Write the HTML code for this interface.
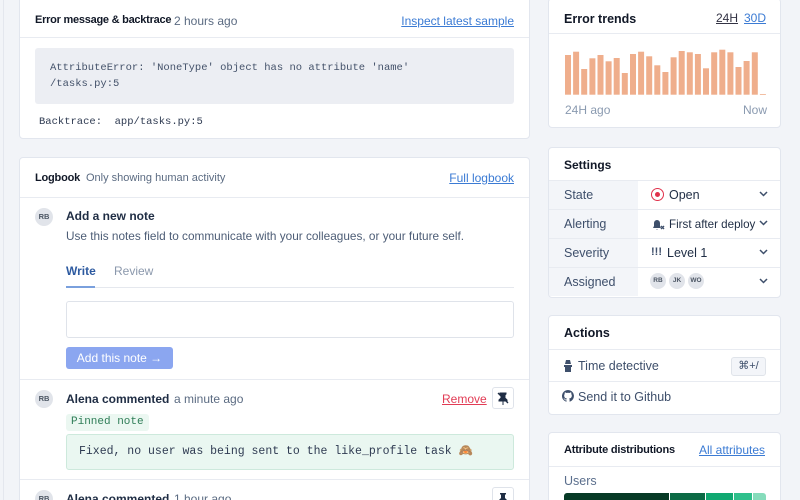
<!DOCTYPE html>
<html style="overflow:hidden;width:800px;height:500px"><head><meta charset="utf-8"><style>
*{box-sizing:border-box;margin:0;padding:0}
body{width:800px;height:500px;overflow:hidden;background:#f2f4f8;font-family:"Liberation Sans",sans-serif;position:relative;color:#1f2937}
.a{position:absolute}
.card{position:absolute;background:#fff;border:1px solid #e2e6ee;border-radius:4px;overflow:hidden}
.mono{font-family:"Liberation Mono",monospace}
.t{font-size:12px;color:#111827;font-weight:600}
.s{font-size:12px;color:#5b6b82}
.link{color:#3b7bd4;text-decoration:underline;font-size:12px}
.hr{position:absolute;left:0;right:0;height:1px;background:#e8ebf1}
.av{position:absolute;width:18px;height:18px;border-radius:50%;background:#e1e4ea;color:#4b5563;font-size:7.5px;font-weight:700;text-align:center;line-height:18px}
.row{position:absolute;left:0;right:0;height:29px;border-top:1px solid #e8ebf1}
.row .l{position:absolute;left:0;top:0;width:89px;height:28px;background:#f3f5f9;font-size:12.5px;color:#3e4f6b;padding:7px 0 0 15px}
.row .v{position:absolute;left:102px;top:7px;font-size:12.5px;color:#1f2d44}
.chev{position:absolute;right:12px;top:10px}
</style></head><body>
<div class="a" style="left:3px;top:0;width:1px;height:500px;background:#e4e7ee"></div>

<!-- error card -->
<div class="card" style="left:19px;top:-5px;width:511px;height:144px">
 <div class="a t" style="left:15px;top:18px;font-size:11px;letter-spacing:-0.25px">Error message &amp; backtrace</div>
 <div class="a s" style="left:154px;top:18px">2 hours ago</div>
 <div class="a link" style="right:15px;top:18px">Inspect latest sample</div>
 <div class="hr" style="top:41px"></div>
 <div class="a mono" style="left:15px;top:52px;width:479px;height:56px;background:#eceef3;border-radius:3px;padding:12px 15px;font-size:10.5px;line-height:16px;color:#44526a">AttributeError: 'NoneType' object has no attribute 'name'<br>/tasks.py:5</div>
 <div class="a mono" style="left:19px;top:120px;font-size:10.5px;color:#2f3b52">Backtrace:&nbsp; app/tasks.py:5</div>
</div>

<!-- logbook -->
<div class="card" style="left:19px;top:157px;width:511px;height:360px">
 <div class="a t" style="left:15px;top:14px;font-size:11px;letter-spacing:-0.2px">Logbook</div>
 <div class="a s" style="left:66px;top:14px;font-size:11px">Only showing human activity</div>
 <div class="a link" style="right:15px;top:13px">Full logbook</div>
 <div class="hr" style="top:39px"></div>
 <div class="av" style="left:15px;top:50px">RB</div>
 <div class="a" style="left:46px;top:51px;font-size:12px;font-weight:600;color:#1f2d44">Add a new note</div>
 <div class="a" style="left:46px;top:71px;font-size:11.8px;color:#4d5d76">Use this notes field to communicate with your colleagues, or your future self.</div>
 <div class="a" style="left:46px;top:106px;font-size:12px;font-weight:600;color:#2d5aa0">Write</div>
 <div class="a" style="left:94px;top:106px;font-size:12px;color:#8b98ac">Review</div>
 <div class="a" style="left:46px;top:129px;width:448px;height:1px;background:#e5e8ee"></div>
 <div class="a" style="left:46px;top:128px;width:29px;height:2px;background:#7aa0dd"></div>
 <div class="a" style="left:46px;top:143px;width:448px;height:37px;border:1px solid #dfe3ea;border-radius:3px"></div>
 <div class="a" style="left:46px;top:189px;width:107px;height:22px;background:#8ba6f0;border-radius:3px;color:#fff;font-size:12px;text-align:center;line-height:22px">Add this note →</div>
 <div class="hr" style="top:221px"></div>
 <div class="av" style="left:15px;top:232px">RB</div>
 <div class="a" style="left:46px;top:234px;font-size:12px;font-weight:600;color:#1f2d44">Alena commented</div>
 <div class="a s" style="left:154px;top:234px">a minute ago</div>
 <div class="a" style="left:422px;top:234px;font-size:12px;color:#e23c55;text-decoration:underline">Remove</div>
 <div class="a" style="left:472px;top:229px;width:22px;height:22px;border:1px solid #dfe3ea;border-radius:3px">
  <svg width="20" height="20" viewBox="0 0 20 20"><path d="M7 5h6v1l-1 1v3l2 2v1H6v-1l2-2V7L7 6z M10 13v4" fill="#1f2d44" stroke="#1f2d44" stroke-width="1"/><path d="M5 5l10 10" stroke="#1f2d44" stroke-width="1.3"/></svg>
 </div>
 <div class="a mono" style="left:46px;top:256px;height:17px;padding:0 5px;background:#ebf7f1;color:#2f7d57;font-size:11px;line-height:17px;border-radius:3px">Pinned note</div>
 <div class="a mono" style="left:46px;top:276px;width:448px;height:36px;background:#eaf7f1;border:1px solid #cde9dc;border-radius:3px;padding:0 0 0 12px;line-height:34px;font-size:11.5px;color:#2f3b52">Fixed, no user was being sent to the like_profile task 🙈</div>
 <div class="hr" style="top:321px"></div>
 <div class="av" style="left:15px;top:332px">RB</div>
 <div class="a" style="left:46px;top:334px;font-size:12px;font-weight:600;color:#1f2d44">Alena commented</div>
 <div class="a s" style="left:154px;top:334px">1 hour ago</div>
 <div class="a" style="left:472px;top:329px;width:22px;height:22px;border:1px solid #dfe3ea;border-radius:3px">
  <svg width="20" height="20" viewBox="0 0 20 20"><path d="M7 5h6v1l-1 1v3l2 2v1H6v-1l2-2V7L7 6z" fill="#1f2d44"/></svg>
 </div>
</div>

<!-- error trends -->
<div class="card" style="left:548px;top:-2px;width:233px;height:130px">
 <div class="a t" style="left:15px;top:13px;font-size:12.5px;font-weight:600">Error trends</div>
 <div class="a" style="left:167px;top:12px;font-size:12px;color:#334;text-decoration:underline">24H</div>
 <div class="a link" style="left:195px;top:12px">30D</div>
 <div class="hr" style="top:34px"></div>
 <svg class="a" style="left:0;top:2px" width="233" height="100">
  <g fill="#efae8c" id="bars"></g>
 </svg>
 <div class="a" style="left:16px;top:104px;font-size:12px;color:#8a9ab0">24H ago</div>
 <div class="a" style="right:13px;top:104px;font-size:12px;color:#8a9ab0">Now</div>
</div>

<!-- settings -->
<div class="card" style="left:548px;top:147px;width:233px;height:151px">
 <div class="a t" style="left:15px;top:10px;font-size:12px">Settings</div>
 <div class="row" style="top:32px"><div class="l">State</div><div class="a" style="left:102px;top:7px;width:13px;height:13px;border:1.5px solid #e0314b;border-radius:50%"><div style="width:5px;height:5px;margin:2.5px;border-radius:50%;background:#e0314b"></div></div><div class="v" style="left:120px">Open</div><svg class="chev" width="9" height="6"><path d="M1 1l3.5 3.5L8 1" stroke="#3e4f6b" stroke-width="1.5" fill="none"/></svg></div>
 <div class="row" style="top:61px"><div class="l">Alerting</div><svg class="a" style="left:102px;top:8px" width="14" height="13"><path d="M2 10h8l-1-2V5a3 3 0 0 0-6 0v3z M5 11a1.5 1.5 0 0 0 2 0" fill="#3e4f6b"/><path d="M10 8l3 3M13 8l-3 3" stroke="#3e4f6b" stroke-width="1.4"/></svg><div class="v" style="left:120px;font-size:11.6px;top:8px">First after deploy</div><svg class="chev" width="9" height="6"><path d="M1 1l3.5 3.5L8 1" stroke="#3e4f6b" stroke-width="1.5" fill="none"/></svg></div>
 <div class="row" style="top:90px"><div class="l">Severity</div><div class="v" style="font-weight:700;font-size:11px;color:#3e4f6b">!!!</div><div class="v" style="left:118px">Level 1</div><svg class="chev" width="9" height="6"><path d="M1 1l3.5 3.5L8 1" stroke="#3e4f6b" stroke-width="1.5" fill="none"/></svg></div>
 <div class="row" style="top:119px"><div class="l">Assigned</div><div class="av" style="left:101px;top:5px;width:16px;height:16px;line-height:16px;font-size:6.5px">RB</div><div class="av" style="left:120px;top:5px;width:16px;height:16px;line-height:16px;font-size:6.5px">JK</div><div class="av" style="left:139px;top:5px;width:16px;height:16px;line-height:16px;font-size:6.5px">WO</div><svg class="chev" width="9" height="6"><path d="M1 1l3.5 3.5L8 1" stroke="#3e4f6b" stroke-width="1.5" fill="none"/></svg></div>
</div>

<!-- actions -->
<div class="card" style="left:548px;top:315px;width:233px;height:100px">
 <div class="a t" style="left:15px;top:10px;font-size:12.5px">Actions</div>
 <div class="hr" style="top:33px"></div>
 <svg class="a" style="left:14px;top:44px" width="10" height="12"><path d="M3 0h4l1 4H2z M1 5h8v2H1z M2 7h6v5H2z" fill="#3e4f6b"/></svg>
 <div class="a" style="left:29px;top:43px;font-size:12.5px;color:#3e4f6b">Time detective</div>
 <div class="a" style="left:182px;top:41px;width:35px;height:19px;background:#f3f5f9;border:1px solid #e0e4ea;border-radius:3px;font-size:11px;text-align:center;line-height:17px;color:#3e4f6b">⌘+/</div>
 <div class="hr" style="top:65px"></div>
 <svg class="a" style="left:13px;top:74px" width="12" height="12" viewBox="0 0 16 16"><path d="M8 0a8 8 0 0 0-2.5 15.6c.4 0 .5-.2.5-.4v-1.5c-2.2.5-2.7-1-2.7-1-.4-.9-.9-1.2-.9-1.2-.7-.5.1-.5.1-.5.8.1 1.2.8 1.2.8.7 1.3 1.9.9 2.3.7.1-.5.3-.9.5-1.1-1.8-.2-3.6-.9-3.6-4 0-.9.3-1.6.8-2.1-.1-.2-.4-1 .1-2.1 0 0 .7-.2 2.2.8a7.500 7.500 0 0 1 4 0c1.5-1 2.2-.8 2.2-.8.4 1.1.2 1.900.1 2.100.5.6.8 1.3.8 2.1 0 3.100-1.900 3.800-3.600 4 .3.3.6.8.6 1.5v2.200c0 .2.1.5.6.4A8 8 0 0 0 8 0z" fill="#3e4f6b"/></svg>
 <div class="a" style="left:29px;top:74px;font-size:12.5px;color:#3e4f6b">Send it to Github</div>
</div>

<!-- attributes -->
<div class="card" style="left:548px;top:432px;width:233px;height:80px">
 <div class="a t" style="left:15px;top:11px;font-size:11px;letter-spacing:-0.2px">Attribute distributions</div>
 <div class="a link" style="right:15px;top:10px">All attributes</div>
 <div class="hr" style="top:33px"></div>
 <div class="a" style="left:15px;top:41px;font-size:12.5px;color:#5b6f8d">Users</div>
 <div class="a" style="left:15px;top:60px;width:202px;height:10px;border-radius:3px;overflow:hidden;display:flex">
  <div style="width:105px;background:#073a26;margin-right:1px"></div>
  <div style="width:35px;background:#0b6a45;margin-right:1px"></div>
  <div style="width:27px;background:#10a871;margin-right:1px"></div>
  <div style="width:18px;background:#2fc08c;margin-right:1px"></div>
  <div style="flex:1;background:#86dcbb"></div>
 </div>
</div>

<script>
var h=[168,158,210,178,168,187,177,222,165,158,172,199,219,175,156,160,165,208,160,152,160,204,186,160];
var g=document.getElementById('bars'),s='';
for(var i=0;i<h.length;i++){var x=16+i*8.12,y=h[i]/3-2;s+='<rect x="'+x.toFixed(1)+'" y="'+y.toFixed(1)+'" width="6" height="'+(95.7-h[i]/3).toFixed(1)+'"/>';}
s+='<rect x="'+(16+24*8.12).toFixed(1)+'" y="93" width="6" height="0.8"/>';
g.innerHTML=s;
</script>
</body></html>
